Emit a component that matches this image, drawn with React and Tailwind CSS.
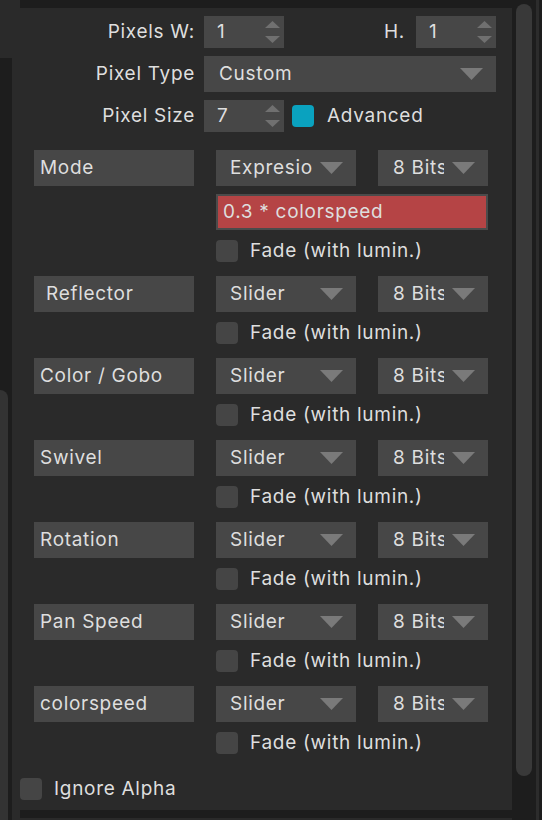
import React from 'react'

const CHANNELS = [
  { name: 'Mode', mode: 'Expresio', expr: '0.3 * colorspeed' },
  { name: ' Reflector', mode: 'Slider' },
  { name: 'Color / Gobo', mode: 'Slider' },
  { name: 'Swivel', mode: 'Slider' },
  { name: 'Rotation', mode: 'Slider' },
  { name: 'Pan Speed', mode: 'Slider' },
  { name: 'colorspeed', mode: 'Slider' },
]

function DownArrow() {
  return (
    <svg width="23" height="12" viewBox="0 0 23 12" className="shrink-0">
      <polygon points="0,0 23,0 11.5,12" fill="#7a7a7a" />
    </svg>
  )
}

function SpinBox({ value }) {
  return (
    <div className="flex h-[32px] w-[80px] items-center justify-between bg-[#474747] pl-[13px] pr-[4px]">
      <span>{value}</span>
      <div className="flex flex-col gap-[8px]">
        <svg width="15" height="7" viewBox="0 0 15 7">
          <polygon points="7.5,0 15,7 0,7" fill="#707070" />
        </svg>
        <svg width="15" height="7" viewBox="0 0 15 7">
          <polygon points="0,0 15,0 7.5,7" fill="#707070" />
        </svg>
      </div>
    </div>
  )
}

function Check({ on }) {
  return (
    <div className={'h-[22px] w-[22px] shrink-0 rounded-[4px] ' + (on ? 'bg-[#0aa2bf]' : 'bg-[#454545]')} />
  )
}

function FadeRow() {
  return (
    <div className="flex h-[22px] items-center gap-[12px] pl-[204px]">
      <Check />
      <span className="pt-[1px]">Fade (with lumin.)</span>
    </div>
  )
}

function Channel({ ch }) {
  return (
    <div className="flex flex-col">
      <div className="flex h-[36px] items-stretch">
        <div className="ml-[22px] flex w-[160px] items-center whitespace-pre bg-[#474747] pl-[6px] pt-[1px]">{ch.name}</div>
        <div className="ml-[22px] flex w-[140px] items-center justify-between bg-[#474747] pl-[14px] pr-[13px]">
          <span className="overflow-hidden whitespace-nowrap pt-[1px]">{ch.mode}</span>
          <DownArrow />
        </div>
        <div className="ml-[22px] flex w-[110px] items-center justify-between bg-[#474747] pl-[15px] pr-[13px]">
          <span className="w-[51px] overflow-hidden whitespace-nowrap pt-[1px]">8 Bits</span>
          <DownArrow />
        </div>
      </div>
      {ch.expr && (
        <div className="ml-[204px] mt-[8px] flex h-[36px] w-[272px] items-center border-2 border-[#4b4b4b] bg-[#b54445] pl-[5px] pt-[1px]">
          {ch.expr}
        </div>
      )}
      <div className="mt-[10px]">
        <FadeRow />
      </div>
    </div>
  )
}

export default function App() {
  return (
    <div
      className="flex h-[820px] w-[542px] overflow-hidden bg-[#1d1d1d] text-[19px] tracking-[0.7px] text-[#dedede]"
      style={{ fontFamily: 'Inter, "Noto Sans", sans-serif' }}
    >
      {/* left neighbour panel */}
      <div className="flex w-[12px] flex-col">
        <div className="h-[58px] bg-[#2a2a2a]" />
        <div className="mt-[332px] h-[430px] w-[8px] rounded-tr-[8px] bg-[#333333]" />
      </div>

      {/* main panel */}
      <div className="flex w-[500px] flex-col bg-[#2a2a2a]">
        <div className="ml-[8px] h-[8px] bg-[#1d1d1d]" />

        <div className="flex flex-1 flex-col">
          {/* pixel settings */}
          <div className="mt-[8px] flex h-[32px] items-center">
            <div className="w-[183px] pt-[1px] text-right">Pixels W:</div>
            <div className="ml-[9px]"><SpinBox value="1" /></div>
            <div className="ml-auto mr-[16px] flex items-center gap-[11px]">
              <span>H.</span>
              <SpinBox value="1" />
            </div>
          </div>
          <div className="mt-[8px] flex h-[36px] items-center">
            <div className="w-[183px] pt-[1px] text-right">Pixel Type</div>
            <div className="ml-[9px] flex h-full w-[292px] items-center justify-between bg-[#474747] pl-[15px] pr-[13px]">
              <span className="pt-[1px]">Custom</span>
              <DownArrow />
            </div>
          </div>
          <div className="mt-[8px] flex h-[32px] items-center">
            <div className="w-[183px] pt-[1px] text-right">Pixel Size</div>
            <div className="ml-[9px]"><SpinBox value="7" /></div>
            <div className="ml-[8px] flex items-center gap-[13px]">
              <Check on />
              <span className="pt-[1px]">Advanced</span>
            </div>
          </div>

          {/* channels */}
          <div className="mt-[18px] flex flex-col gap-[14px]">
            {CHANNELS.map((ch) => (
              <Channel key={ch.name} ch={ch} />
            ))}
          </div>

          <div className="ml-[8px] mt-[24px] flex h-[22px] items-center gap-[12px]">
            <Check />
            <span className="pt-[1px]">Ignore Alpha</span>
          </div>
        </div>

        <div className="ml-[8px] h-[8px] bg-[#1d1d1d]" />
        <div className="h-[2px]" />
      </div>

      {/* scrollbar */}
      <div className="ml-[4px] flex w-[16px] flex-col pt-[4px]">
        <div className="h-[772px] rounded-full bg-[#393939]" />
      </div>
      <div className="ml-[4px] w-[3px] bg-[#2c2c2c]" />
    </div>
  )
}
